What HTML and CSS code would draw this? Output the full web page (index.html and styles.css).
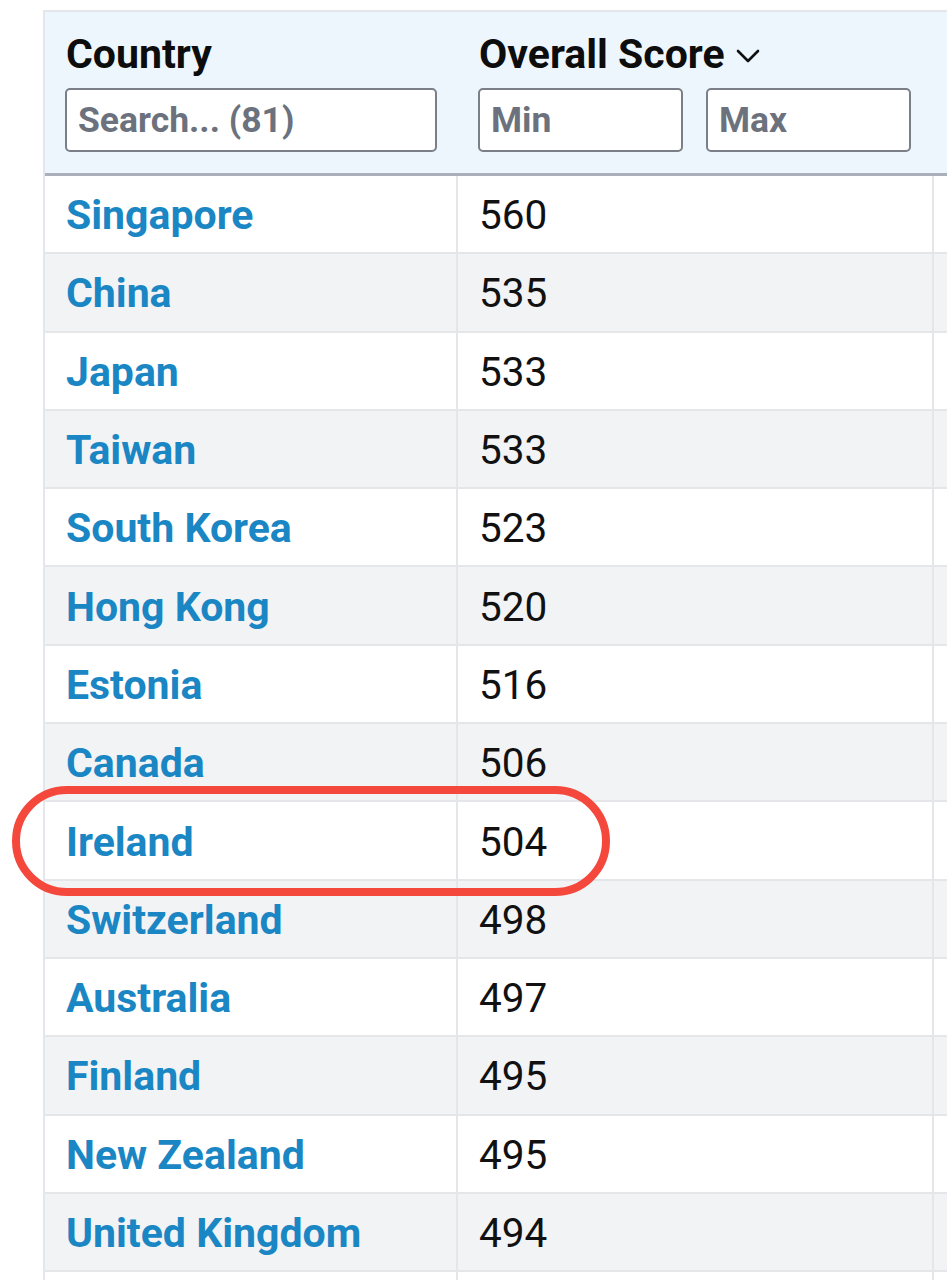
FILE: index.html
```html
<!DOCTYPE html>
<html>
<head>
<meta charset="utf-8">
<link rel="stylesheet" href="styles.css">
</head>
<body>
<div class="page">
  <div class="table">
    <div class="head">
      <div class="hcell">
        <div class="htitle">Country</div>
        <div class="filters">
          <input class="inp search" placeholder="Search... (81)">
        </div>
      </div>
      <div class="hcell">
        <div class="htitle">Overall Score <svg class="chev" width="26" height="16" viewBox="0 0 26 16"><polyline points="3,3 13,13 23,3" fill="none" stroke="#111" stroke-width="2.6" stroke-linecap="round" stroke-linejoin="round"/></svg></div>
        <div class="filters">
          <input class="inp num" placeholder="Min">
          <input class="inp num" placeholder="Max">
        </div>
      </div>
      <div class="hcell"></div>
    </div>
    <div class="row"><div class="cell name">Singapore</div><div class="cell val">560</div><div class="cell"></div></div>
    <div class="row alt"><div class="cell name">China</div><div class="cell val">535</div><div class="cell"></div></div>
    <div class="row"><div class="cell name">Japan</div><div class="cell val">533</div><div class="cell"></div></div>
    <div class="row alt"><div class="cell name">Taiwan</div><div class="cell val">533</div><div class="cell"></div></div>
    <div class="row"><div class="cell name">South Korea</div><div class="cell val">523</div><div class="cell"></div></div>
    <div class="row alt"><div class="cell name">Hong Kong</div><div class="cell val">520</div><div class="cell"></div></div>
    <div class="row"><div class="cell name">Estonia</div><div class="cell val">516</div><div class="cell"></div></div>
    <div class="row alt"><div class="cell name">Canada</div><div class="cell val">506</div><div class="cell"></div></div>
    <div class="row"><div class="cell name">Ireland</div><div class="cell val">504</div><div class="cell"></div></div>
    <div class="row alt"><div class="cell name">Switzerland</div><div class="cell val">498</div><div class="cell"></div></div>
    <div class="row"><div class="cell name">Australia</div><div class="cell val">497</div><div class="cell"></div></div>
    <div class="row alt"><div class="cell name">Finland</div><div class="cell val">495</div><div class="cell"></div></div>
    <div class="row"><div class="cell name">New Zealand</div><div class="cell val">495</div><div class="cell"></div></div>
    <div class="row alt"><div class="cell name">United Kingdom</div><div class="cell val">494</div><div class="cell"></div></div>
    <div class="row"><div class="cell name"></div><div class="cell val"></div><div class="cell"></div></div>
  </div>
  <div class="highlight"></div>
</div>
</body>
</html>
```

FILE: styles.css
```css
html, body {
  margin: 0;
  padding: 0;
  background: #ffffff;
  overflow: hidden;
}
body {
  font-family: Roboto, "Noto Sans", Arial, sans-serif;
  width: 947px;
  height: 1280px;
}
.page {
  position: relative;
  width: 947px;
  height: 1280px;
  overflow: hidden;
}
.table {
  margin: 10px 0 0 43px;
  width: 1000px;
  border-top: 2px solid #e3e7ec;
  border-left: 2px solid #e3e7ec;
}
.head {
  display: grid;
  grid-template-columns: 413px 476px 1fr;
  background: #eef6fd;
  border-bottom: 3px solid #a9b0ba;
  height: 164px;
  box-sizing: border-box;
}
.hcell {
  padding: 17px 0 0 20px;
}
.htitle {
  font-size: 41px;
  font-weight: 700;
  color: #0d0d0d;
  line-height: 50px;
  height: 50px;
  display: flex;
  align-items: center;
  padding-left: 1px;
}
.chev {
  margin-left: 10px;
  margin-top: 4px;
}
.filters {
  display: flex;
  gap: 23px;
  margin-top: 9px;
}
.inp {
  box-sizing: border-box;
  height: 64px;
  border: 2px solid #7b7f87;
  border-radius: 5px;
  background: #fff;
  font-family: inherit;
  font-size: 35.5px;
  font-weight: 700;
  padding: 0 0 0 11px;
  margin: 0;
  outline: none;
}
.inp::placeholder {
  color: #6c727d;
  opacity: 1;
}
.search {
  width: 372px;
}
.num {
  width: 205px;
}
.row {
  display: grid;
  grid-template-columns: 413px 476px 1fr;
  height: 78.3px;
  box-sizing: border-box;
  border-bottom: 2px solid #e4e6e9;
  background: #ffffff;
}
.row.alt {
  background: #f2f3f5;
}
.cell {
  border-right: 2px solid #e4e6e9;
  display: flex;
  align-items: center;
  padding-left: 21px;
  padding-top: 2px;
}
.name {
  font-size: 41px;
  font-weight: 700;
  color: #1a86c3;
}
.val {
  font-size: 40.5px;
  font-weight: 400;
  color: #111111;
}
.highlight {
  position: absolute;
  left: 12px;
  top: 786px;
  width: 598px;
  height: 110px;
  box-sizing: border-box;
  border: 8px solid #f5483d;
  border-radius: 55px;
}
```
